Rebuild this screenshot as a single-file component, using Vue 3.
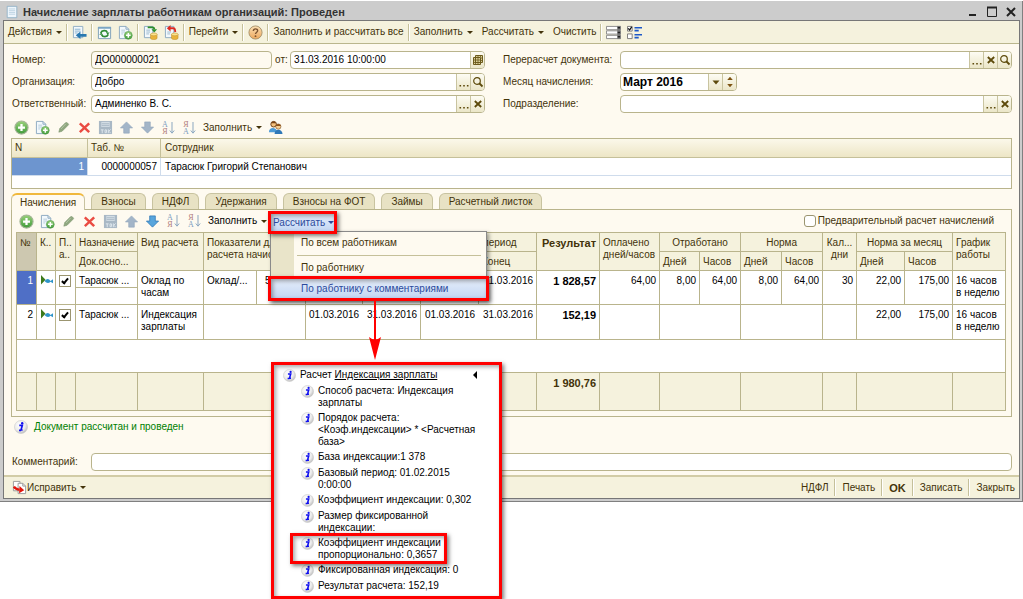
<script setup>
import { ref } from 'vue'

const number = ref('ДО000000021')
const date = ref('31.03.2016 10:00:00')
const organization = ref('Добро')
const responsible = ref('Админенко В. С.')
const recalcDoc = ref('')
const month = ref('Март 2016')
const department = ref('')
const comment = ref('')
const preliminary = ref(false)
const checked = ref([true, true])

const tabs = ['Начисления', 'Взносы', 'НДФЛ', 'Удержания', 'Взносы на ФОТ', 'Займы', 'Расчетный листок']
const activeTab = ref('Начисления')

const editIcons = [
  ['plus', 'Добавить'], ['copy', 'Скопировать'], ['pencil', 'Изменить'], ['cross', 'Удалить'],
  ['save', 'Закончить редактирование'], ['up', 'Вверх'], ['down', 'Вниз'], ['asc', 'По возрастанию'], ['desc', 'По убыванию'],
]

const columns = [20, 19, 20, 62, 66, 53, 49, 57, 58, 58, 58, 63, 60, 40, 41, 41, 41, 34, 48, 48, 53]
const footSpans = [1, 1, 1, 1, 1, 2, 2, 2]
const footTail = [1, 2, 2, 1, 2, 1]

const notes = [
  'Способ расчета: Индексация\nзарплаты',
  'Порядок расчета:\n<Коэф.индексации> * <Расчетная\nбаза>',
  'База индексации:1 378',
  'Базовый период: 01.02.2015\n0:00:00',
  'Коэффициент индексации: 0,302',
  'Размер фиксированной\nиндексации:',
  'Коэффициент индексации\nпропорционально: 0,3657',
  'Фиксированная индексация: 0',
  'Результат расчета: 152,19',
]
const actions = ['НДФЛ', 'Печать', 'OK', 'Записать', 'Закрыть']
</script>

<template>
  <div class="page">
    <svg class="defs" aria-hidden="true">
      <defs>
        <linearGradient id="g-green" x1="0" y1="0" x2="0" y2="1"><stop offset="0" stop-color="#9ad27c" /><stop offset="1" stop-color="#3f9a3a" /></linearGradient>
        <linearGradient id="g-orange" x1="0" y1="0" x2="0" y2="1"><stop offset="0" stop-color="#fbe0b4" /><stop offset="1" stop-color="#eda75c" /></linearGradient>
        <radialGradient id="g-info" cx=".4" cy=".35" r=".7"><stop offset="0" stop-color="#fff" /><stop offset=".6" stop-color="#ececec" /><stop offset="1" stop-color="#b8b8b8" /></radialGradient>
      </defs>
      <symbol id="i-doc" viewBox="0 0 16 16"><path d="M2.500 1.500h11v13h-11z" fill="#eef6fc" stroke="#8fb0c6" /><path d="M4.500 4.500h7M4.500 6.500h7M4.500 8.500h7M4.500 10.500h7" stroke="#b9d0e0" /></symbol>
      <symbol id="i-back" viewBox="0 0 16 16"><path d="M1.500 1.500h10v12h-10z" fill="#f2f8fc" stroke="#8eacc2" /><path d="M3 4.500h6M3 6.500h6M3 8.500h3" stroke="#86b0ce" /><path d="M4 11l5-4v2.500h6.500v3H9V15z" fill="#2878b0" /></symbol>
      <symbol id="i-refresh" viewBox="0 0 16 16"><path d="M1.500 2.500h13v12h-13z" fill="#f4fafd" stroke="#7d9fb8" /><path d="M1 2h14v2H1z" fill="#7ca6c4" /><path d="M4 8.500c1-3 6-3.500 7-.5" fill="none" stroke="#2f8b35" stroke-width="1.800" /><path d="M9.500 8h4L11.500 10.500z" fill="#2f8b35" /><path d="M12 10c-1 3-6 3-7 .5" fill="none" stroke="#2f8b35" stroke-width="1.800" /><path d="M2.500 10.500h4L4.500 8z" fill="#2f8b35" /></symbol>
      <symbol id="i-copy" viewBox="0 0 16 16"><path d="M1.500 1.500h7l3 3v10h-10z" fill="#f2f8fc" stroke="#8ba9c0" /><path d="M8.500 1.500v3h3" fill="none" stroke="#8ba9c0" /><path d="M3.500 5.500h4M3.500 7.500h4M3.500 9.500h2" stroke="#b4cbdc" /><circle cx="11" cy="11" r="4.200" fill="url(#g-green)" stroke="#4c9748" stroke-width=".6" /><path d="M11 8.500v5M8.500 11h5" stroke="#fff" stroke-width="1.600" /></symbol>
      <symbol id="i-post" viewBox="0 0 16 16"><path d="M1.500 1.500h9v12h-9z" fill="#f2f8fc" stroke="#8ba9c0" /><path d="M3.500 5.500h4M3.500 7.500h4M3.500 9.500h3" stroke="#9ab9cf" /><path d="M5 2.500h5q2 0 2 2" fill="none" stroke="#2d8f2a" stroke-width="2" /><path d="M9 4.500h6L12 8z" fill="#2d8f2a" /><path d="M8 10v4c0 2 7 2 7 0v-4z" fill="#e9b43b" stroke="#b98522" stroke-width=".5" /><ellipse cx="11.500" cy="10" rx="3.500" ry="1.500" fill="#fbe28c" stroke="#b98522" stroke-width=".5" /></symbol>
      <symbol id="i-unpost" viewBox="0 0 16 16"><path d="M1.500 1.500h9v12h-9z" fill="#f2f8fc" stroke="#8ba9c0" /><path d="M3.500 7.500h4M3.500 9.500h3" stroke="#9ab9cf" /><path d="M6 3.500h4q2 0 2 4" fill="none" stroke="#dd2a22" stroke-width="2" /><path d="M7 0v7L3 3.500z" fill="#dd2a22" /><path d="M8 10v4c0 2 7 2 7 0v-4z" fill="#e9b43b" stroke="#b98522" stroke-width=".5" /><ellipse cx="11.500" cy="10" rx="3.500" ry="1.500" fill="#fbe28c" stroke="#b98522" stroke-width=".5" /></symbol>
      <symbol id="i-help" viewBox="0 0 16 16"><circle cx="8" cy="8" r="7" fill="url(#g-orange)" stroke="#a8936e" /><path d="M5.700 6.500c0-3.300 4.800-3 4.600-.3C10.200 7.800 8 7.800 8 9.700" fill="none" stroke="#7d5430" stroke-width="1.500" /><circle cx="8" cy="11.900" r="1" fill="#7d5430" /></symbol>
      <symbol id="i-rows" viewBox="0 0 16 16"><path d="M.5 1.500h15v3.500H.5zM.5 6.200h15v3.500H.5zM.5 11h15v3.500H.5z" fill="#fff" stroke="#8a8a8a" /><path d="M12 1h3.500v14H12z" fill="#777" /><path d="M12.500 3h2.500M12.500 8h2.500M12.500 12.500h2.500" stroke="#222" stroke-width="1.500" /></symbol>
      <symbol id="i-checks" viewBox="0 0 16 16"><path d="M.5 1.500h5v5h-5zM.5 9.500h5v5h-5z" fill="#fff" stroke="#777" /><path d="M1.300 3.500l1.500 1.800L5 2" fill="none" stroke="#111" stroke-width="1.300" /><path d="M8 2h8v1.800H8zM8 5h4.500v1.800H8zM8 9.500h8v1.800H8zM8 12.500h4.500v1.800H8z" fill="#1c58c8" /></symbol>
      <symbol id="i-plus" viewBox="0 0 16 16"><circle cx="8" cy="8" r="7" fill="url(#g-green)" stroke="#a5b597" stroke-width="1.200" /><path d="M8 4.300v7.400M4.300 8h7.400" stroke="#fff" stroke-width="2.400" /></symbol>
      <symbol id="i-pencil" viewBox="0 0 16 16"><path d="M3 13l1-4 6-6q2-1 3 1l.5 1-7 7z" fill="#8fa77f" stroke="#7d956e" stroke-width=".6" /><path d="M5.500 9.500l5-5.500" stroke="#b5c6a8" /></symbol>
      <symbol id="i-cross" viewBox="0 0 16 16"><path d="M3 3.500l10 9.500M13 3.500L3 13" stroke="#ea4b42" stroke-width="2.600" /></symbol>
      <symbol id="i-save" viewBox="0 0 16 16"><path d="M1 1h14v14H1z" fill="#a9b8c5" /><path d="M3.500 2h9v5.500h-9z" fill="#d3dde5" /><path d="M4 4h8M4 6h8" stroke="#a9b8c5" /><path d="M3 10.500h3M4.500 10.500v3.500M7.500 10.500h1.500v3H7.500zM11 10v4M13.500 10l-2 2 2 2" fill="none" stroke="#dfe7ee" /></symbol>
      <symbol id="i-up" viewBox="0 0 16 16"><path d="M8 2l6.500 6.500H11V14H5V8.500H1.500z" fill="#a3b5c8" stroke="#8da3b9" stroke-width=".6" /></symbol>
      <symbol id="i-down" viewBox="0 0 16 16"><path d="M8 14L1.500 7.500H5V2h6v5.500h3.500z" fill="#a3b5c8" stroke="#8da3b9" stroke-width=".6" /></symbol>
      <symbol id="i-downblue" viewBox="0 0 16 16"><path d="M8 14L1.500 7.500H5V2h6v5.500h3.500z" fill="#58a5dc" stroke="#2f77b4" stroke-width=".8" /></symbol>
      <symbol id="i-sort" viewBox="0 0 6 14"><path d="M3 1v11M.8 9.500L3 12.200 5.200 9.500" fill="none" stroke="#8ba7c0" /></symbol>
      <symbol id="i-people" viewBox="0 0 16 16"><circle cx="6" cy="4.500" r="3" fill="#f4c07c" stroke="#6b4018" /><path d="M3.500 3.500C4 1 8 1 8.500 3.500z" fill="#7a4212" /><path d="M1 13c0-6 8-6 9 0z" fill="#4d9bd6" /><circle cx="11" cy="7" r="2.800" fill="#f7cf92" stroke="#6b4018" stroke-width=".6" /><path d="M8.200 6.500C8.500 3.500 13.500 3.500 13.800 6.500z" fill="#8c4f18" /><path d="M7 15c0-6 8-6 8.500 0z" fill="#2f78b8" /></symbol>
      <symbol id="i-info" viewBox="0 0 14 14"><circle cx="7" cy="7" r="6.500" fill="url(#g-info)" stroke="#c9c9c9" stroke-width=".6" /><path d="M5.300 5.400h3L7 10h1.600M5 10.300h2" fill="none" stroke="#1010ee" stroke-width="1.700" /><circle cx="8.200" cy="3.200" r="1.200" fill="#1010ee" /></symbol>
      <symbol id="i-mag" viewBox="0 0 12 12"><circle cx="5" cy="5" r="3.300" fill="none" stroke="#5d4a0b" stroke-width="1.200" /><path d="M7.500 7.500l3 3" stroke="#5d4a0b" stroke-width="1.800" /></symbol>
      <symbol id="i-x" viewBox="0 0 12 12"><path d="M2.800 3l6.400 6M9.200 3L2.800 9" stroke="#5d4a0b" stroke-width="1.800" /></symbol>
      <symbol id="i-dots" viewBox="0 0 12 12"><path d="M1.500 9h1.600v1.600H1.500zM5.200 9h1.600v1.600H5.200zM8.900 9h1.600v1.600H8.900z" fill="#5d4a0b" /></symbol>
      <symbol id="i-cal" viewBox="0 0 12 12"><path d="M3.500 1.500h7v7h-7zM1.500 3.500h7v7h-7z" fill="#d9cf98" stroke="#6c5a1c" /><path d="M3.500 3v8M6 3v8M1.500 6H9M1.500 8.500H9M6 1.500V3M8.500 1.500V3M9 4h1.500M9 6.500h1.500" stroke="#6c5a1c" stroke-width=".8" /></symbol>
      <symbol id="i-drop" viewBox="0 0 12 12"><path d="M2.500 4.500h7L6 8.500z" fill="#5d4a0b" /></symbol>
      <symbol id="i-spin" viewBox="0 0 12 12"><path d="M3.200 4h5.600L6 .8zM3.200 8h5.600L6 11.200z" fill="#7d5312" /></symbol>
      <symbol id="i-play" viewBox="0 0 14 12"><path d="M1 0v9.500l4.500-4.800z" fill="#3d7a1c" /><path d="M4.500 6q3.500-4 6 0l2.500-1.800v4L10.500 6.800q-3 3-6-.8z" fill="#2f95c9" /></symbol>
      <symbol id="i-fix" viewBox="0 0 16 16"><path d="M1.500 1.500h7v10h-7z" fill="#fff" stroke="#999" /><path d="M6.500 3.500h5l3 3v8h-8z" fill="#fff" stroke="#999" /><path d="M11.500 3.500v3h3" fill="none" stroke="#999" /><path d="M2 7q2 3 6 3.500" fill="none" stroke="#e3170d" stroke-width="2.600" /><path d="M8 6.500l5 4.500-5.500 3z" fill="#e3170d" /></symbol>
    </svg>

    <main class="window">
      <header class="titlebar">
        <svg class="ico"><use href="#i-doc" /></svg>
        <h1>Начисление зарплаты работникам организаций: Проведен</h1>
        <div class="sys">
          <button aria-label="Свернуть"><svg viewBox="0 0 12 12"><path d="M2 9h7" stroke="#222" stroke-width="2" /></svg></button>
          <button aria-label="Развернуть"><svg viewBox="0 0 12 12"><path d="M1.500 1.500h9v9h-9z" fill="none" stroke="#222" /><path d="M1 1.500h10" stroke="#222" stroke-width="2" /></svg></button>
          <button aria-label="Закрыть окно"><svg viewBox="0 0 12 12"><path d="M2 2l8 8M10 2l-8 8" stroke="#222" stroke-width="2" /></svg></button>
        </div>
      </header>

      <div class="client">
        <nav class="bar main-bar">
          <button class="tb">Действия<i class="arr"></i></button>
          <span class="sep"></span>
          <button class="ib" aria-label="Перейти к списку"><svg class="ico"><use href="#i-back" /></svg></button>
          <span class="sep"></span>
          <button class="ib" aria-label="Обновить"><svg class="ico"><use href="#i-refresh" /></svg></button>
          <button class="ib" aria-label="Скопировать документ"><svg class="ico"><use href="#i-copy" /></svg></button>
          <span class="sep"></span>
          <button class="ib" aria-label="Провести"><svg class="ico"><use href="#i-post" /></svg></button>
          <button class="ib" aria-label="Отмена проведения"><svg class="ico"><use href="#i-unpost" /></svg></button>
          <span class="sep"></span>
          <button class="tb">Перейти<i class="arr"></i></button>
          <span class="sep"></span>
          <button class="ib" aria-label="Справка"><svg class="ico"><use href="#i-help" /></svg></button>
          <span class="sep"></span>
          <button class="tb">Заполнить и рассчитать все</button>
          <span class="sep"></span>
          <button class="tb">Заполнить<i class="arr"></i></button>
          <button class="tb">Рассчитать<i class="arr"></i></button>
          <button class="tb">Очистить</button>
          <span class="sep"></span>
          <button class="ib" aria-label="Строки"><svg class="ico"><use href="#i-rows" /></svg></button>
          <button class="ib" aria-label="Настройка списка"><svg class="ico"><use href="#i-checks" /></svg></button>
        </nav>

        <form class="form" @submit.prevent>
          <div class="col left">
            <div class="row">
              <label for="num">Номер:</label>
              <div class="field num"><input id="num" v-model="number"></div>
              <label class="from" for="date">от:</label>
              <div class="field date"><input id="date" v-model="date"><button type="button" aria-label="Календарь"><svg><use href="#i-cal" /></svg></button></div>
            </div>
            <div class="row">
              <label for="org">Организация:</label>
              <div class="field"><input id="org" v-model="organization"><button type="button" aria-label="Выбрать"><svg><use href="#i-dots" /></svg></button><button type="button" aria-label="Открыть"><svg><use href="#i-mag" /></svg></button></div>
            </div>
            <div class="row">
              <label for="resp">Ответственный:</label>
              <div class="field"><input id="resp" v-model="responsible"><button type="button" aria-label="Выбрать"><svg><use href="#i-dots" /></svg></button><button type="button" aria-label="Очистить"><svg><use href="#i-x" /></svg></button></div>
            </div>
          </div>
          <div class="col right">
            <div class="row">
              <label for="doc">Перерасчет документа:</label>
              <div class="field"><input id="doc" v-model="recalcDoc"><button type="button" aria-label="Выбрать"><svg><use href="#i-dots" /></svg></button><button type="button" aria-label="Очистить"><svg><use href="#i-x" /></svg></button><button type="button" aria-label="Открыть"><svg><use href="#i-mag" /></svg></button></div>
            </div>
            <div class="row">
              <label for="month">Месяц начисления:</label>
              <div class="field month"><input id="month" v-model="month"><button type="button" aria-label="Список"><svg><use href="#i-drop" /></svg></button><button type="button" aria-label="Изменить месяц"><svg><use href="#i-spin" /></svg></button></div>
            </div>
            <div class="row">
              <label for="dep">Подразделение:</label>
              <div class="field"><input id="dep" v-model="department"><button type="button" aria-label="Выбрать"><svg><use href="#i-dots" /></svg></button><button type="button" aria-label="Очистить"><svg><use href="#i-x" /></svg></button></div>
            </div>
          </div>
        </form>

        <div class="bar edit-bar">
          <button v-for="[icon, name] in editIcons" :key="icon" class="ib" :aria-label="name">
            <span v-if="icon === 'asc' || icon === 'desc'" class="sort">
              <span><b :class="{ blue: icon === 'asc' }">{{ icon === 'asc' ? 'А' : 'Я' }}</b><b :class="{ blue: icon === 'desc' }">{{ icon === 'asc' ? 'Я' : 'А' }}</b></span>
              <svg><use href="#i-sort" /></svg>
            </span>
            <svg v-else class="ico"><use :href="'#i-' + icon" /></svg>
          </button>
          <button class="tb">Заполнить<i class="arr"></i></button>
          <button class="ib" aria-label="Подбор работников"><svg class="ico"><use href="#i-people" /></svg></button>
        </div>

        <div class="staff-box">
          <table class="staff">
            <colgroup><col class="c-n"><col class="c-tab"><col></colgroup>
            <thead><tr><th>N</th><th>Таб. №</th><th>Сотрудник</th></tr></thead>
            <tbody><tr><td class="sel">1</td><td class="r">0000000057</td><td>Тарасюк Григорий Степанович</td></tr></tbody>
          </table>
        </div>

        <div class="tabs" role="tablist">
          <button v-for="t in tabs" :key="t" role="tab" :aria-selected="t === activeTab" :class="{ on: t === activeTab }" @click="activeTab = t">{{ t }}</button>
        </div>

        <section class="panel">
          <div class="bar edit-bar inner">
            <button v-for="[icon, name] in editIcons" :key="icon" class="ib" :aria-label="name">
              <span v-if="icon === 'asc' || icon === 'desc'" class="sort">
                <span><b :class="{ blue: icon === 'asc' }">{{ icon === 'asc' ? 'А' : 'Я' }}</b><b :class="{ blue: icon === 'desc' }">{{ icon === 'asc' ? 'Я' : 'А' }}</b></span>
                <svg><use href="#i-sort" /></svg>
              </span>
              <svg v-else class="ico"><use :href="icon === 'down' ? '#i-downblue' : '#i-' + icon" /></svg>
            </button>
            <button class="tb">Заполнить<i class="arr"></i></button>
            <label class="prelim"><input v-model="preliminary" type="checkbox">Предварительный расчет начислений</label>
          </div>

          <table class="calc">
            <colgroup><col v-for="(w, i) in columns" :key="i" :style="{ width: w + 'px' }"></colgroup>
            <thead>
              <tr>
                <th rowspan="2" class="num-h">№</th>
                <th rowspan="2">К..</th>
                <th rowspan="2">П..<br>а..</th>
                <th>Назначение</th>
                <th rowspan="2">Вид расчета</th>
                <th rowspan="2" colspan="2">Показатели для<br>расчета начислений</th>
                <th colspan="2" class="c">Период</th>
                <th colspan="2" class="c">Базовый период</th>
                <th rowspan="2" class="bold r">Результат</th>
                <th rowspan="2">Оплачено<br>дней/часов</th>
                <th colspan="2" class="c">Отработано</th>
                <th colspan="2" class="c">Норма</th>
                <th rowspan="2" class="c">Кал...<br>дни</th>
                <th colspan="2" class="c">Норма за месяц</th>
                <th rowspan="2">График<br>работы</th>
              </tr>
              <tr>
                <th>Док.осно...</th>
                <th>Начало</th><th>Конец</th><th>Начало</th><th>Конец</th>
                <th>Дней</th><th>Часов</th><th>Дней</th><th>Часов</th><th>Дней</th><th>Часов</th>
              </tr>
            </thead>
            <tbody>
              <tr class="half">
                <td rowspan="2" class="sel r">1</td>
                <td rowspan="2" class="mark"><svg><use href="#i-play" /></svg></td>
                <td rowspan="2" class="mark"><input v-model="checked[0]" type="checkbox" aria-label="Строка 1"></td>
                <td>Тарасюк ...</td>
                <td rowspan="2">Оклад по<br>часам</td>
                <td rowspan="2">Оклад/...</td>
                <td rowspan="2" class="five">5 000,00</td>
                <td rowspan="2"></td><td rowspan="2"></td><td rowspan="2"></td>
                <td rowspan="2" class="r">31.03.2016</td>
                <td rowspan="2" class="bold r">1 828,57</td>
                <td rowspan="2" class="r">64,00</td>
                <td rowspan="2" class="r">8,00</td>
                <td rowspan="2" class="r">64,00</td>
                <td rowspan="2" class="r">8,00</td>
                <td rowspan="2" class="r">64,00</td>
                <td rowspan="2" class="r">30</td>
                <td rowspan="2" class="r">22,00</td>
                <td rowspan="2" class="r">175,00</td>
                <td rowspan="2">16 часов<br>в неделю</td>
              </tr>
              <tr class="half"><td></td></tr>
              <tr class="full">
                <td class="r">2</td>
                <td class="mark"><svg><use href="#i-play" /></svg></td>
                <td class="mark"><input v-model="checked[1]" type="checkbox" aria-label="Строка 2"></td>
                <td>Тарасюк ...</td>
                <td>Индексация<br>зарплаты</td>
                <td colspan="2"></td>
                <td class="r open">01.03.2016</td><td class="r">31.03.2016</td>
                <td class="r open">01.03.2016</td><td class="r">31.03.2016</td>
                <td class="bold r">152,19</td>
                <td></td><td colspan="2"></td><td colspan="2"></td><td></td>
                <td class="r open">22,00</td><td class="r">175,00</td>
                <td>16 часов<br>в неделю</td>
              </tr>
              <tr class="blank"><td colspan="21"></td></tr>
            </tbody>
            <tfoot>
              <tr>
                <td v-for="(s, i) in footSpans" :key="'a' + i" :colspan="s"></td>
                <td class="bold r">1 980,76</td>
                <td v-for="(s, i) in footTail" :key="'b' + i" :colspan="s"></td>
              </tr>
            </tfoot>
          </table>
        </section>

        <p class="status"><svg><use href="#i-info" /></svg>Документ рассчитан и проведен</p>

        <div class="row comment">
          <label for="comment">Комментарий:</label>
          <div class="field"><input id="comment" v-model="comment"></div>
        </div>

        <footer class="bar bottom">
          <button class="tb fix"><svg class="ico"><use href="#i-fix" /></svg>Исправить<i class="arr"></i></button>
          <div class="actions">
            <template v-for="(a, i) in actions" :key="a">
              <span v-if="i" class="sep"></span>
              <button class="tb" :class="{ bold: a === 'OK' }">{{ a }}</button>
            </template>
          </div>
        </footer>
      </div>
    </main>

    <button class="calc-btn frame">Рассчитать<i class="arr"></i></button>
    <div class="menu" role="menu">
      <button role="menuitem">По всем работникам</button>
      <hr>
      <button role="menuitem">По работнику</button>
      <button role="menuitem" class="hot frame">По работнику с комментариями</button>
    </div>
    <svg class="pointer" viewBox="0 0 16 60" aria-hidden="true"><path d="M8 0v40" stroke="#f00" stroke-width="2" /><path d="M2 36q6 5 12 0L8 59z" fill="#f00" /></svg>

    <aside class="notes frame">
      <p class="note head"><svg><use href="#i-info" /></svg><span>Расчет <a href="#">Индексация зарплаты</a></span><i></i></p>
      <ul>
        <li v-for="n in notes" :key="n" class="note"><svg><use href="#i-info" /></svg><span>{{ n }}</span></li>
      </ul>
      <div class="mark-box frame"></div>
    </aside>
  </div>
</template>

<style>
body { margin: 0; background: #fff; }
</style>

<style scoped>
.page { position: relative; min-height: 599px; font: 10px/12px "Liberation Sans", Arial, sans-serif; color: #43330a; }
.page *, .page *::before { box-sizing: border-box; }
.defs { position: absolute; width: 0; height: 0; }
button, input { font: inherit; color: inherit; }
button { padding: 0; border: 0; background: none; white-space: nowrap; cursor: pointer; }
.ico { width: 15px; height: 15px; flex: none; display: block; }
.bold { font-weight: bold; font-size: 11px; }

.window { margin-top: 1px; padding: 0 2px 2px 3px; background: #ccc; border-bottom: 1px solid #808080; border-right: 1px solid #808080; }
.titlebar { display: flex; align-items: center; gap: 4px; height: 19px; padding: 2px 3px 0 2px; }
.titlebar h1 { flex: 1; margin: 0; font-size: 11px; font-weight: bold; color: #333; white-space: nowrap; }
.titlebar .ico { width: 14px; height: 14px; }
.sys { display: flex; gap: 7px; }
.sys svg { display: block; width: 12px; height: 12px; }
.client { border: 1px solid #777; background: #fefaf0; }

.bar { display: flex; align-items: center; }
.main-bar { height: 23px; padding: 0 4px; background: #f5f2dd; border-bottom: 1px solid #bab68d; }
.sep { width: 2px; height: 17px; margin: 0 4px; border-left: 1px solid #c5c09a; border-right: 1px solid #fff; flex: none; }
.arr { display: inline-block; margin-left: 4px; vertical-align: middle; border: 3px solid transparent; border-top-color: #43330a; border-bottom: 0; }
.ib { display: block; flex: none; }
.main-bar .ib + .ib { margin-left: 6px; }
.main-bar .tb + .tb { margin-left: 9px; }

.form { display: grid; grid-template-columns: 473fr 509fr; gap: 18px; padding: 7px 7px 0 8px; }
.col { display: flex; flex-direction: column; gap: 4px; }
.row { display: flex; align-items: center; }
.row > label { flex: none; width: 79px; white-space: nowrap; }
.right .row > label { width: 117px; }
.row > label.from { width: 18px; padding-left: 3px; }
.field { flex: 1; display: flex; min-width: 0; height: 18px; border: 1px solid #b9b48c; border-radius: 4px; background: #fff; overflow: hidden; }
.field input { flex: 1; min-width: 0; width: 0; padding: 0 3px; border: 0; outline: 0; background: none; color: #000; }
.field button { display: flex; align-items: center; justify-content: center; width: 14px; border-left: 1px solid #c9c4a0; background: linear-gradient(#fdfcf3, #ebe6c8); }
.field svg { width: 12px; height: 12px; }
.field.num { flex: 181; background: #fefaf0; }
.field.date { flex: 195; }
.field.month { flex: none; width: 117px; font-size: 12px; font-weight: bold; }
.field.month input { padding: 0 2px; }

.edit-bar { height: 25px; padding: 4px 10px 0; gap: 6px; }
.sort { display: flex; align-items: center; width: 15px; }
.sort b { display: block; width: 8px; font: 8px/7px "Liberation Serif", serif; color: #b07a7a; text-align: center; }
.sort b.blue { color: #7f9fc0; }
.sort svg { width: 6px; height: 14px; }

.staff-box { height: 51px; margin: 0 7px; border: 1px solid #b9b48c; background: #fff; }
.staff { width: 100%; border-collapse: separate; border-spacing: 0; table-layout: fixed; }
.c-n { width: 76px; }
.c-tab { width: 73px; }
.staff th { height: 19px; padding: 0 3px; text-align: left; font-weight: normal; background: linear-gradient(#fbf8ea, #ede6c6); border-right: 1px solid #c5c09a; border-bottom: 1px solid #c5c09a; }
.staff td { height: 18px; padding: 0 3px; color: #000; border-right: 1px solid #cfdcec; border-bottom: 1px solid #cfdcec; }
.staff th:last-child, .staff td:last-child { border-right: 0; padding-left: 4px; }
.staff td.sel { background: #6d95cf; color: #fff; text-align: right; }
.staff td.r { text-align: right; }

.tabs { display: flex; gap: 6px; height: 20px; margin: 0 7px; padding-top: 4px; align-items: flex-end; }
.tabs button { height: 16px; padding: 0 9px; border: 1px solid #c8c3a0; border-bottom: 0; border-radius: 6px 6px 0 0; background: #e8e2c4; }
.tabs button.on { position: relative; height: 17px; margin-bottom: -1px; padding: 0 8px; border-top: 2px solid #f0b83c; background: #fefaf0; }

.panel { margin: 0 7px; padding: 0 5px 5px 4px; border: 1px solid #b9b48c; }
.inner { height: 22px; padding: 0 12px 0 3px; }
.inner .tb { color: #000; }
.prelim { display: flex; align-items: center; gap: 2px; margin-left: auto; white-space: nowrap; }
input[type="checkbox"] { appearance: none; position: relative; width: 12px; height: 12px; margin: 0; border: 1px solid #9b9570; background: #fff; }
.prelim input[type="checkbox"] { border-radius: 3px; }
input[type="checkbox"]:checked::after { content: ""; position: absolute; left: 3px; top: 1px; width: 4px; height: 7px; border: solid #000; border-width: 0 2px 2px 0; box-sizing: border-box; transform: rotate(40deg); }

.calc { width: 100%; border-collapse: separate; border-spacing: 0; table-layout: fixed; border-left: 1px solid #b9b48c; border-top: 1px solid #b9b48c; background: #fff; white-space: nowrap; }
.calc th, .calc td { padding: 4px 3px 0; overflow: hidden; text-align: left; vertical-align: top; font-weight: normal; border-right: 1px solid #b9b48c; border-bottom: 1px solid #b9b48c; }
.calc th { height: 19px; background: #f5f2dd; }
.calc td { color: #000; }
.calc .r { text-align: right; }
.calc .c { text-align: center; }
.calc .bold { font-weight: bold; }
.calc .num-h { background: #cdc8b0; }
.calc .half td { height: 17px; }
.calc .full td { height: 35px; }
.calc .sel { background: #4f6fc6; color: #fff; }
.calc td.open { border-right: 0; padding-right: 4px; }
.calc td.mark { padding: 4px 3px 0; }
.calc .mark svg { display: block; width: 14px; height: 12px; }
.calc .mark input { display: block; }
.calc .blank td { height: 33px; padding: 0; }
.calc tfoot td { height: 38px; background: #f5f2dd; color: #43330a; }
.calc td.five { padding: 4px 0 0 8px; }

.status { display: flex; align-items: center; gap: 6px; margin: 3px 0 0; padding: 0 10px; height: 14px; color: #008000; }
.status svg { width: 14px; height: 14px; }
.comment { margin: 19px 7px 4px 8px; }
.bottom { height: 23px; padding: 0 4px 0 8px; border-top: 2px solid #d2cca6; background: #f5f2dd; }
.fix { display: flex; align-items: center; }
.actions { display: flex; align-items: center; margin-left: auto; }
.actions .sep { margin: 0 6px; }

.frame { border: 3px solid #f00; box-shadow: 2px 2px 4px rgba(0, 0, 0, .5), inset 2px 2px 4px rgba(0, 0, 0, .35); }
.calc-btn { position: absolute; z-index: 3; left: 268px; top: 210px; width: 69px; height: 23px; text-align: left; padding-left: 2px; background: linear-gradient(#e6eefb, #c3d6f3); color: #2c4a9c; }
.calc-btn .arr { margin-left: 3px; border-top-color: #2c4a9c; }
.menu { position: absolute; z-index: 2; left: 270px; top: 230px; width: 217px; height: 69px; padding: 2px 0 0; border: 1px solid #8a8a8a; background: linear-gradient(to right, #e9e4c9 23px, #fefaf0 23px); box-shadow: 2px 2px 4px rgba(0, 0, 0, .4); }
.menu button { display: block; width: 100%; height: 18px; padding-left: 30px; text-align: left; }
.menu hr { height: 1px; margin: 3px 5px 3px 26px; border: 0; background: #c5c09a; }
.menu button.hot { width: 221px; height: 25px; margin: -1px 0 0 -3px; padding-left: 30px; background: linear-gradient(#e6eefb, #c3d6f3); color: #2c4a9c; }
.pointer { position: absolute; z-index: 3; left: 367px; top: 300px; width: 16px; height: 60px; }

.notes { position: absolute; z-index: 2; left: 271px; top: 361px; width: 231px; height: 237px; padding: 4px 8px 0 9px; background: #fff; color: #000; }
.note { display: flex; align-items: flex-start; gap: 4px; min-height: 13px; margin: 0 0 3px; white-space: pre; }
.note svg { flex: none; width: 13px; height: 13px; }
.note a { color: inherit; }
.head i { margin: 2px 14px 0 auto; border: 4px solid transparent; border-right-color: #000; border-left: 0; }
.notes ul { margin: 0 0 0 18px; padding: 0; list-style: none; }
.mark-box { position: absolute; left: 16px; top: 168px; width: 157px; height: 31px; }
</style>
